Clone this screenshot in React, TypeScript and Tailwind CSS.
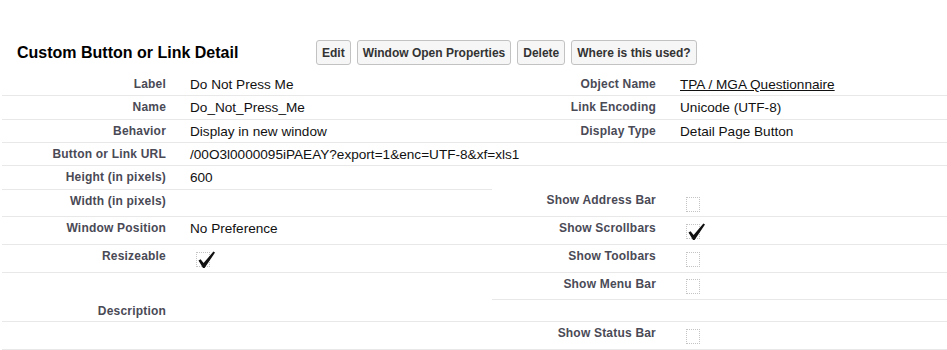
import React from 'react';

const Label: React.FC<{ children?: React.ReactNode; className?: string }> = ({ children, className = 'pt-[4px]' }) => (
  <div className={`w-[174px] shrink-0 pr-[10px] text-right text-[12px] tracking-[0.2px] font-bold leading-[14px] text-[#4a4a56] ${className}`}>
    {children}
  </div>
);

const Value: React.FC<{ children?: React.ReactNode }> = ({ children }) => (
  <div className="flex-1 pl-[14px] pt-[4px] text-[13.6px] leading-[15px] text-[#111] whitespace-nowrap">{children}</div>
);

const Check: React.FC<{ checked?: boolean; className?: string }> = ({ checked, className = 'pt-[7px]' }) => (
  <div className={`flex-1 pl-[20px] ${className}`}>
    <span className="relative block w-[14px] h-[15px] border border-dotted border-[#c4c4c4]">
      {checked && (
        <svg className="absolute left-0 top-[-2px]" width="19" height="18" viewBox="0 0 19 18">
          <path d="M1.5 9.5 L3.6 8.2 L6.6 12 L16.4 0.6 L18 1.6 L7.6 17 L6 17 Z" fill="#111" />
        </svg>
      )}
    </span>
  </div>
);

const Row: React.FC<{ h: string; children: React.ReactNode }> = ({ h, children }) => (
  <div className={`flex border-b border-[#e8e8e8] ${h}`}>{children}</div>
);

const Button: React.FC<{ children: React.ReactNode }> = ({ children }) => (
  <button className="h-[25px] px-[5px] rounded-[3px] border border-[#c2c2c2] bg-[#f6f6f6] text-[12px] font-bold text-[#333]">
    {children}
  </button>
);

export default function App() {
  return (
    <div className="w-[947px] h-[350px] overflow-hidden bg-white pl-[2px] font-['Liberation_Sans',Arial,sans-serif]">
      <div className="flex items-center pt-[40px] mb-[8px]">
        <h2 className="w-[314px] shrink-0 pl-[15px] text-[16px] font-bold text-black">Custom Button or Link Detail</h2>
        <div className="flex gap-[6px]">
          <Button>Edit</Button>
          <Button>Window Open Properties</Button>
          <Button>Delete</Button>
          <Button>Where is this used?</Button>
        </div>
      </div>

      <Row h="h-[23px]">
        <div className="flex w-[490px]">
          <Label>Label</Label>
          <Value>Do Not Press Me</Value>
        </div>
        <div className="flex flex-1">
          <Label>Object Name</Label>
          <Value><span className="underline">TPA / MGA Questionnaire</span></Value>
        </div>
      </Row>
      <Row h="h-[24px]">
        <div className="flex w-[490px]">
          <Label>Name</Label>
          <Value>Do_Not_Press_Me</Value>
        </div>
        <div className="flex flex-1">
          <Label>Link Encoding</Label>
          <Value>Unicode (UTF-8)</Value>
        </div>
      </Row>
      <Row h="h-[23px]">
        <div className="flex w-[490px]">
          <Label>Behavior</Label>
          <Value>Display in new window</Value>
        </div>
        <div className="flex flex-1">
          <Label>Display Type</Label>
          <Value>Detail Page Button</Value>
        </div>
      </Row>
      <Row h="h-[23px]">
        <div className="flex w-[490px]">
          <Label>Button or Link URL</Label>
          <Value>/00O3l0000095iPAEAY?export=1&amp;enc=UTF-8&amp;xf=xls1</Value>
        </div>
        <div className="flex flex-1" />
      </Row>

      {/* window open properties */}
      <Row h="h-[51px]">
        <div className="flex w-[490px] flex-col">
          <div className="flex h-[24px] border-b border-[#e8e8e8]">
            <Label>Height (in pixels)</Label>
            <Value>600</Value>
          </div>
          <div className="flex h-[26px]">
            <Label>Width (in pixels)</Label>
            <Value />
          </div>
        </div>
        <div className="flex flex-1">
          <Label className="pt-[27px]">Show Address Bar</Label>
          <Check className="pt-[31px]" />
        </div>
      </Row>
      <Row h="h-[28px]">
        <div className="flex w-[490px]">
          <Label>Window Position</Label>
          <Value>No Preference</Value>
        </div>
        <div className="flex flex-1">
          <Label>Show Scrollbars</Label>
          <Check checked />
        </div>
      </Row>
      <Row h="h-[28px]">
        <div className="flex w-[490px]">
          <Label>Resizeable</Label>
          <Check checked />
        </div>
        <div className="flex flex-1">
          <Label>Show Toolbars</Label>
          <Check />
        </div>
      </Row>
      <Row h="h-[49px]">
        <div className="flex w-[490px]">
          <Label className="pt-[31px]">Description</Label>
          <Value />
        </div>
        <div className="flex flex-1 flex-col">
          <div className="flex h-[27px] border-b border-[#e8e8e8]">
            <Label>Show Menu Bar</Label>
            <Check className="pt-[6px]" />
          </div>
          <div className="h-[21px]" />
        </div>
      </Row>
      <Row h="h-[28px]">
        <div className="flex w-[490px]" />
        <div className="flex flex-1">
          <Label>Show Status Bar</Label>
          <Check />
        </div>
      </Row>
    </div>
  );
}
